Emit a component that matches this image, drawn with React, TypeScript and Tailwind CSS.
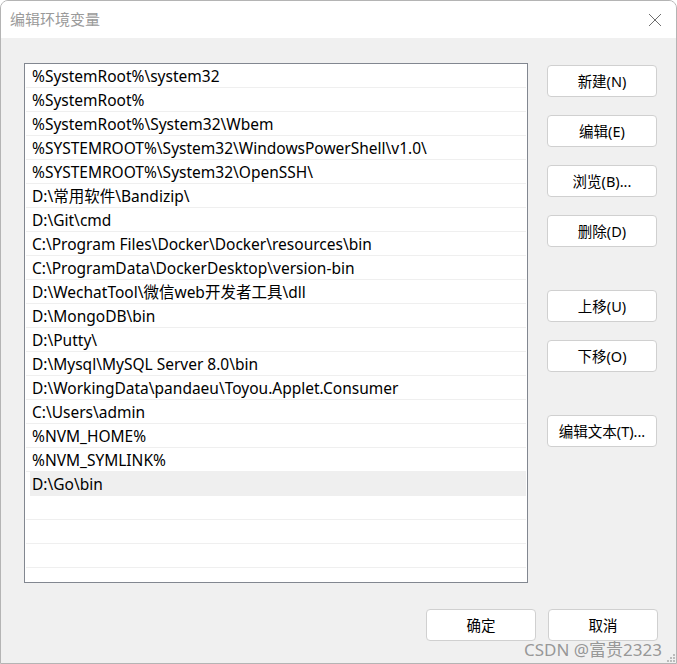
import React from "react"

const paths = [
  "%SystemRoot%\\system32",
  "%SystemRoot%",
  "%SystemRoot%\\System32\\Wbem",
  "%SYSTEMROOT%\\System32\\WindowsPowerShell\\v1.0\\",
  "%SYSTEMROOT%\\System32\\OpenSSH\\",
  "D:\\常用软件\\Bandizip\\",
  "D:\\Git\\cmd",
  "C:\\Program Files\\Docker\\Docker\\resources\\bin",
  "C:\\ProgramData\\DockerDesktop\\version-bin",
  "D:\\WechatTool\\微信web开发者工具\\dll",
  "D:\\MongoDB\\bin",
  "D:\\Putty\\",
  "D:\\Mysql\\MySQL Server 8.0\\bin",
  "D:\\WorkingData\\pandaeu\\Toyou.Applet.Consumer",
  "C:\\Users\\admin",
  "%NVM_HOME%",
  "%NVM_SYMLINK%",
  "D:\\Go\\bin",
]

const font = { fontFamily: '"Noto Sans", "Noto Sans CJK SC", sans-serif' }

const Btn = ({ label, className = "" }: { label: string; className?: string }) => (
  <button
    className={
      "w-[110px] h-[32px] bg-white border border-[#d0d0d0] rounded-[4px] text-[14.5px] text-black flex items-center justify-center pt-[1px] " +
      className
    }
  >
    {label}
  </button>
)

const App = () => {
  const selected = paths.length - 1
  return (
    <div
      className="relative w-[677px] h-[664px] bg-[#f0f0f0] border border-[#b4b4b4] rounded-t-[8px] overflow-hidden flex flex-col"
      style={font}
    >
      <div className="h-[37px] bg-white flex items-center justify-between pl-[9px] pr-[14px]">
        <span className="text-[15px] text-[#9a9a9a]">编辑环境变量</span>
        <svg width="14" height="14" viewBox="0 0 14 14" className="mt-[1px]">
          <path d="M1 1 L13 13 M13 1 L1 13" stroke="#6e6e6e" strokeWidth="1" fill="none" />
        </svg>
      </div>

      <div className="flex pl-[23px] pt-[25px]">
        <div className="w-[504px] h-[520px] bg-white border border-[#828790] px-[1px] overflow-hidden">
          {paths.map((p, i) => (
            <div
              key={i}
              className={
                i === selected
                  ? "h-[24px] flex items-center pt-[2px] ml-[4px] pl-[2px] bg-[#efefef] text-[15.5px] text-black border-b border-[#efefef] whitespace-nowrap"
                  : "h-[24px] flex items-center pt-[2px] pl-[6px] text-[15.5px] text-black border-b border-[#efefef] whitespace-nowrap"
              }
            >
              {p}
            </div>
          ))}
          <div className="h-[24px] border-b border-[#efefef]" />
          <div className="h-[24px] border-b border-[#efefef]" />
          <div className="h-[24px] border-b border-[#efefef]" />
        </div>

        <div className="flex flex-col ml-[19px] pt-[2px]">
          <Btn label="新建(N)" />
          <Btn label="编辑(E)" className="mt-[18px]" />
          <Btn label="浏览(B)..." className="mt-[18px]" />
          <Btn label="删除(D)" className="mt-[18px]" />
          <Btn label="上移(U)" className="mt-[43px]" />
          <Btn label="下移(O)" className="mt-[18px]" />
          <Btn label="编辑文本(T)..." className="mt-[43px]" />
        </div>
      </div>

      <div className="flex justify-end gap-[12px] pr-[18px] pt-[26px]">
        <Btn label="确定" />
        <Btn label="取消" />
      </div>

      <span className="absolute right-[14px] bottom-[5px] text-[17px] text-[#8c8c8c]/90 leading-none">
        CSDN @富贵2323
      </span>
      <svg width="8" height="8" viewBox="0 0 8 8" className="absolute right-[1px] bottom-[1px]">
        <rect x="6" y="0" width="2" height="2" fill="#bcbcbc" />
        <rect x="3" y="3" width="2" height="2" fill="#bcbcbc" />
        <rect x="6" y="3" width="2" height="2" fill="#bcbcbc" />
        <rect x="0" y="6" width="2" height="2" fill="#bcbcbc" />
        <rect x="3" y="6" width="2" height="2" fill="#bcbcbc" />
        <rect x="6" y="6" width="2" height="2" fill="#bcbcbc" />
      </svg>
    </div>
  )
}

export default App
